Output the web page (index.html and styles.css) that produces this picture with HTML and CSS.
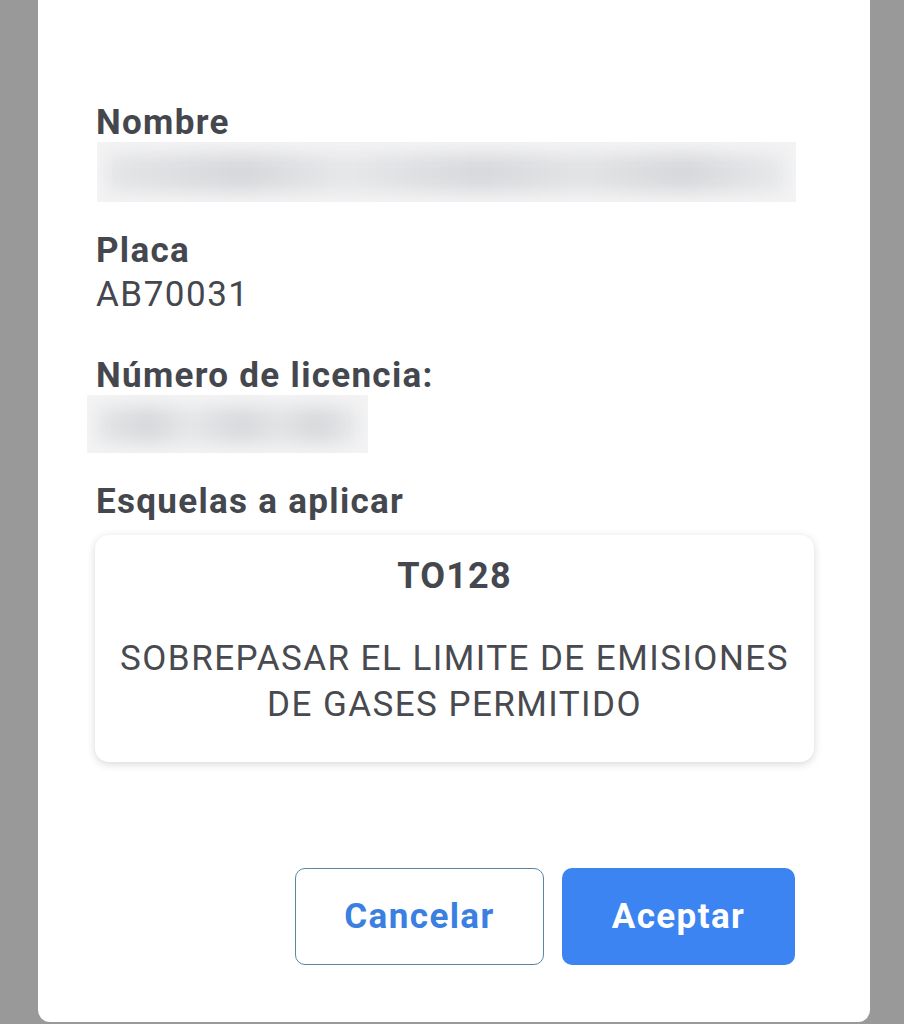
FILE: index.html
```html
<!DOCTYPE html>
<html lang="es">
<head>
    <meta charset="UTF-8">
    <meta name="viewport" content="width=device-width, initial-scale=1.0">
    <title>Esquelas</title>
    <link rel="stylesheet" href="styles.css">
</head>
<body>
    <div class="modal">
        <div class="field">
            <div class="label">Nombre</div>
            <div class="hidden-value name-blur"><div class="smudge"></div></div>
        </div>
        <div class="field">
            <div class="label">Placa</div>
            <div class="value">AB70031</div>
        </div>
        <div class="field field-license">
            <div class="label">Número de licencia:</div>
            <div class="hidden-value license-blur"><div class="smudge"></div></div>
        </div>
        <div class="field">
            <div class="label">Esquelas a aplicar</div>
            <div class="ticket">
                <div class="ticket-code">TO128</div>
                <div class="ticket-desc">SOBREPASAR EL LIMITE DE EMISIONES<br>DE GASES PERMITIDO</div>
            </div>
        </div>
        <div class="actions">
            <button class="btn btn-cancel">Cancelar</button>
            <button class="btn btn-ok">Aceptar</button>
        </div>
    </div>
</body>
</html>
```

FILE: styles.css
```css
body {
    margin: 0;
    padding: 0;
    background-color: #999999;
    font-family: Roboto, "Liberation Sans", Arial, sans-serif;
    color: #44474d;
}

.modal {
    margin-left: 38px;
    width: 832px;
    height: 1022px;
    box-sizing: border-box;
    background-color: #fff;
    border-radius: 0 0 12px 12px;
    padding: 104px 0 0 58px;
}

.field {
    margin-bottom: 30px;
}

.label {
    font-size: 35px;
    font-weight: bold;
    letter-spacing: 1.3px;
    line-height: 38px;
}

.value {
    font-size: 35px;
    letter-spacing: 1.5px;
    line-height: 38px;
    margin-top: 6px;
    margin-bottom: 43px;
}

.hidden-value {
    overflow: hidden;
    position: relative;
    background-color: #f4f4f5;
}

.smudge {
    position: absolute;
    left: 10px;
    right: 10px;
    top: 12px;
    bottom: 10px;
    background: linear-gradient(90deg, #e4e5e7 0%, #d6d7da 20%, #e6e7e9 35%, #d7d8db 55%, #e2e3e5 70%, #d6d7da 85%, #e8e9eb 100%);
    filter: blur(9px);
}

.name-blur {
    width: 699px;
    height: 60px;
    margin-left: 1px;
}

.license-blur {
    width: 281px;
    height: 58px;
    margin-left: -9px;
}

.ticket {
    margin-top: 14px;
    width: 719px;
    height: 227px;
    box-sizing: border-box;
    margin-left: -1px;
    background-color: #fff;
    border-radius: 14px;
    box-shadow: 0 2px 9px rgba(0, 0, 0, 0.16);
    text-align: center;
    padding-top: 19px;
}

.ticket-code {
    font-size: 36px;
    font-weight: bold;
    letter-spacing: 1.2px;
    line-height: 44px;
}

.ticket-desc {
    margin-top: 38px;
    font-size: 35px;
    letter-spacing: 1.45px;
    line-height: 46px;
    color: #484a50;
}

.actions {
    display: flex;
    justify-content: flex-end;
    gap: 18px;
    padding-right: 75px;
    margin-top: 106px;
}

.btn {
    height: 97px;
    border-radius: 10px;
    font-family: Roboto, "Liberation Sans", Arial, sans-serif;
    font-size: 35px;
    font-weight: bold;
    letter-spacing: 1.4px;
    cursor: pointer;
}

.btn-cancel {
    width: 249px;
    background-color: #fff;
    border: 1.5px solid #5b86a3;
    color: #3b7fe2;
}

.btn-ok {
    width: 233px;
    background-color: #3b84f1;
    border: none;
    color: #fff;
}
```
